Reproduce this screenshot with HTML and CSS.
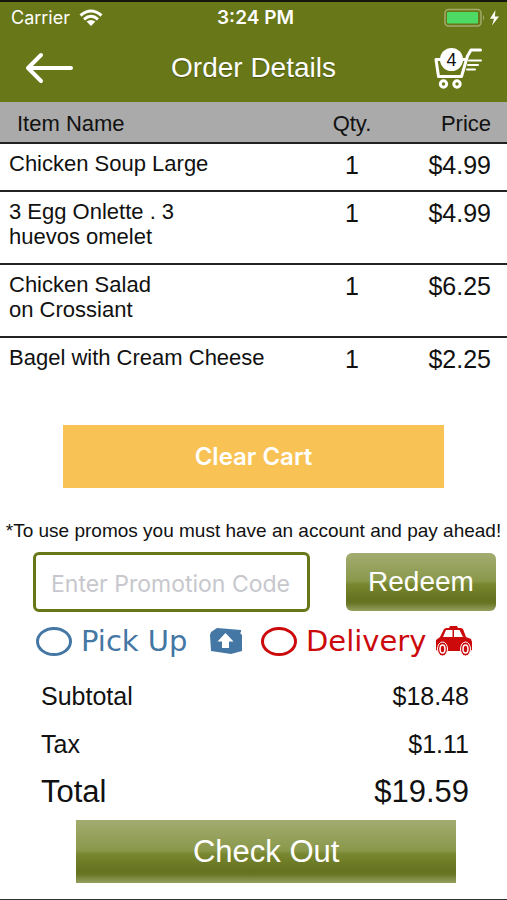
FILE: index.html
```html
<!DOCTYPE html>
<html lang="en">
<head>
<meta charset="utf-8">
<meta name="viewport" content="width=device-width, initial-scale=1">
<title>Order Details</title>
<link rel="stylesheet" href="styles.css">
</head>
<body>
<header class="top">
  <div class="status">
    <div class="carrier">
      <span>Carrier</span>
      <svg width="24" height="18" viewBox="0 0 24 18" aria-hidden="true">
        <g fill="none" stroke="#fff" stroke-width="3"><path d="M1.5 6.5Q12-2.5 22.500 6.500"/><path d="M5 10.300Q12 4.300 19 10.300"/></g>
        <path fill="#fff" d="M7.600 12.600Q12 9.200 16.400 12.600L12 17z"/>
      </svg>
    </div>
    <time class="clock">3:24 PM</time>
    <div class="power">
      <svg width="56" height="20" viewBox="0 0 56 20" aria-hidden="true">
        <rect x="1" y="1.500" width="36" height="16.500" rx="3.500" fill="none" stroke="#a3ab6c" stroke-width="1.500"/>
        <rect x="3" y="4" width="31" height="11.500" rx="1" fill="#4cd964"/>
        <path d="M39 7q2.500 2.700 0 5.500z" fill="#a3ab6c"/>
        <path d="M51.500 2L46 10.800h4L48 17.500l7-9h-4.200z" fill="#fff"/>
      </svg>
    </div>
  </div>
  <nav class="bar">
    <button class="icon-button" type="button" aria-label="Back">
      <svg width="50" height="32" viewBox="0 0 50 32" fill="none" stroke="#fff" stroke-width="4" stroke-linecap="round" stroke-linejoin="round"><path d="M47 16H4M17 3L4 16L17 29"/></svg>
    </button>
    <h1 class="title">Order Details</h1>
    <button class="icon-button cart" type="button" aria-label="Cart, 4 items">
      <svg width="50" height="42" viewBox="0 0 50 42" fill="none" stroke="#fff" stroke-width="3" stroke-linecap="round" stroke-linejoin="round">
        <path d="M47.500 3H38L34.500 9L28.500 29.500H5.500L3 12.500H8M27 12.500H33"/>
        <path d="M36 13.500H48M35 18H45M34 22.500H42" stroke-width="2"/>
        <circle cx="10.500" cy="37" r="3.200"/><circle cx="24" cy="37" r="3.200"/>
      </svg>
      <span class="badge">4</span>
    </button>
  </nav>
</header>
<main>
  <table class="items">
    <thead><tr><th scope="col">Item Name</th><th scope="col" class="qty">Qty.</th><th scope="col" class="price">Price</th></tr></thead>
    <tbody>
      <tr><td>Chicken Soup Large</td><td class="qty">1</td><td class="price">$4.99</td></tr>
      <tr><td>3 Egg Onlette . 3<br>huevos omelet</td><td class="qty">1</td><td class="price">$4.99</td></tr>
      <tr><td>Chicken Salad<br>on Crossiant</td><td class="qty">1</td><td class="price">$6.25</td></tr>
      <tr><td>Bagel with Cream Cheese</td><td class="qty">1</td><td class="price">$2.25</td></tr>
    </tbody>
  </table>
  <button class="clear" type="button">Clear Cart</button>
  <form class="checkout">
    <p class="note">*To use promos you must have an account and pay ahead!</p>
    <div class="promo">
      <input class="code" type="text" placeholder="Enter Promotion Code" aria-label="Enter Promotion Code">
      <button class="green redeem" type="button">Redeem</button>
    </div>
    <div class="methods">
      <label class="method pickup"><input type="radio" name="method"><span>Pick Up</span>
        <svg width="34" height="28" viewBox="0 0 34 28" aria-hidden="true"><path fill="#4477a4" d="M2 5L8 1L32 3V5L31 6L33 8V24L22 27L2 24L1 8z"/><path fill="#fff" d="M16.500 6L8.500 14.500H13V21H20V14.500H24.500z"/></svg>
      </label>
      <label class="method delivery"><input type="radio" name="method"><span>Delivery</span>
        <svg width="38" height="32" viewBox="0 0 38 32" aria-hidden="true">
          <path fill="#cc0a0c" d="M9 4L11 3H14L15 1H22L23 3H26L28 4L31 12L36 14L37 17V25L35 26H3L1 25V15L5 12z"/>
          <path fill="#fff" d="M11 5H17.500V12H8zM19 5H24.500L28 12H19z"/>
          <g fill="#cc0a0c" stroke="#fff"><ellipse cx="7.500" cy="24" rx="5" ry="7"/><ellipse cx="30.500" cy="24" rx="5" ry="7"/></g>
          <g fill="#cc0a0c" stroke="#fff" stroke-width="1.500"><ellipse cx="7.500" cy="24" rx="2.500" ry="4"/><ellipse cx="30.500" cy="24" rx="2.500" ry="4"/></g>
        </svg>
      </label>
    </div>
    <dl class="totals">
      <div><dt>Subtotal</dt><dd>$18.48</dd></div>
      <div><dt>Tax</dt><dd>$1.11</dd></div>
      <div class="total"><dt>Total</dt><dd>$19.59</dd></div>
    </dl>
    <button class="green submit" type="submit">Check Out</button>
  </form>
</main>
</body>
</html>
```
FILE: styles.css
```css
* { box-sizing: border-box; }
body {
  margin: 0;
  min-height: 100vh;
  border-top: 2px solid #15160c;
  border-bottom: 1px solid #333;
  background: #fff;
  color: #111;
  font-family: "Liberation Sans", Arial, sans-serif;
}
button, input { font: inherit; color: inherit; }
button { border: 0; padding: 0; cursor: pointer; }
svg { display: block; flex: none; }

.top { background: #687717; color: #fff; }
.status {
  display: grid;
  grid-template-columns: 1fr auto 1fr;
  align-items: center;
  height: 32px;
  padding: 0 7px 0 11px;
  font: 18px/32px Inter, sans-serif;
}
.carrier { display: flex; align-items: center; gap: 9px; }
.clock { font-size: 19px; font-weight: 600; }
.power { justify-self: end; }
.bar {
  display: flex;
  align-items: center;
  justify-content: space-between;
  height: 68px;
  padding: 0 24px;
}
.title { margin: 0; font-size: 28px; font-weight: 400; text-shadow: 0 1px 1px #4a5510; }
.icon-button { position: relative; background: none; }
.badge {
  position: absolute;
  top: 1px;
  left: 7px;
  width: 23px;
  height: 23px;
  border-radius: 50%;
  background: #fff;
  color: #111;
  font-size: 18px;
  line-height: 24px;
}

.items { width: 100%; border-collapse: collapse; font-size: 22px; line-height: 25px; }
.items th {
  background: #aaa;
  padding: 9px 17px 6px;
  border-bottom: 2px solid #222;
  font-weight: 400;
  text-align: left;
}
.items td { padding: 7px 9px 14px; vertical-align: top; border-bottom: 2px solid #222; }
.items tr:last-child td { border-bottom: 0; }
.items .qty { width: 90px; padding-left: 0; padding-right: 0; text-align: center; }
.items .price { width: 110px; padding-left: 0; padding-right: 16px; text-align: right; }
.items td.qty, .items td.price { padding-top: 9px; padding-bottom: 12px; font-size: 25px; }

.clear {
  display: block;
  width: 75%;
  height: 63px;
  margin: 41px auto 29px;
  background: #f9c255;
  color: #fff;
  font: 600 24px Inter, sans-serif;
}
.note { margin: 0; font-size: 19px; line-height: 28px; text-align: center; white-space: nowrap; }
.promo { display: flex; align-items: center; gap: 36px; margin-top: 7px; padding: 0 11px 0 33px; }
.code {
  flex: 1;
  min-width: 0;
  height: 60px;
  padding: 4px 15px 0;
  border: 3px solid #687717;
  border-radius: 6px;
  background: #fff;
  font: 23px Inter, sans-serif;
}
.code::placeholder { color: #c7c7cd; opacity: 1; }
.green {
  color: #fff;
  background: linear-gradient(#a2ac70, #8a984b 48%, #78872f 54%, #65721f 80%, #687522 86%, #95a060);
}
.redeem { width: 150px; height: 58px; border-radius: 6px; font-size: 28px; }
.methods { display: flex; gap: 18px; padding: 0 34px 0 36px; margin-top: 11px; }
.method { display: flex; align-items: center; height: 36px; font: 29px/36px "DejaVu Sans", sans-serif; }
.method input {
  appearance: none;
  flex: none;
  width: 36px;
  height: 29px;
  margin: 0 9px 0 0;
  border: 3px solid currentColor;
  border-radius: 50%;
}
.method span { white-space: nowrap; }
.method svg { margin-left: auto; }
.pickup { color: #4477a4; flex: 207; }
.delivery { color: #cc0a0c; flex: 212; }
.totals { margin: 13px 38px 0 41px; font-size: 25px; line-height: 48px; }
.totals div { display: flex; justify-content: space-between; }
.totals dd { margin: 0; }
.totals .total { font-size: 31px; }
.submit { display: block; width: 75%; height: 63px; margin: 4px 10% 16px auto; font-size: 31px; }
```
